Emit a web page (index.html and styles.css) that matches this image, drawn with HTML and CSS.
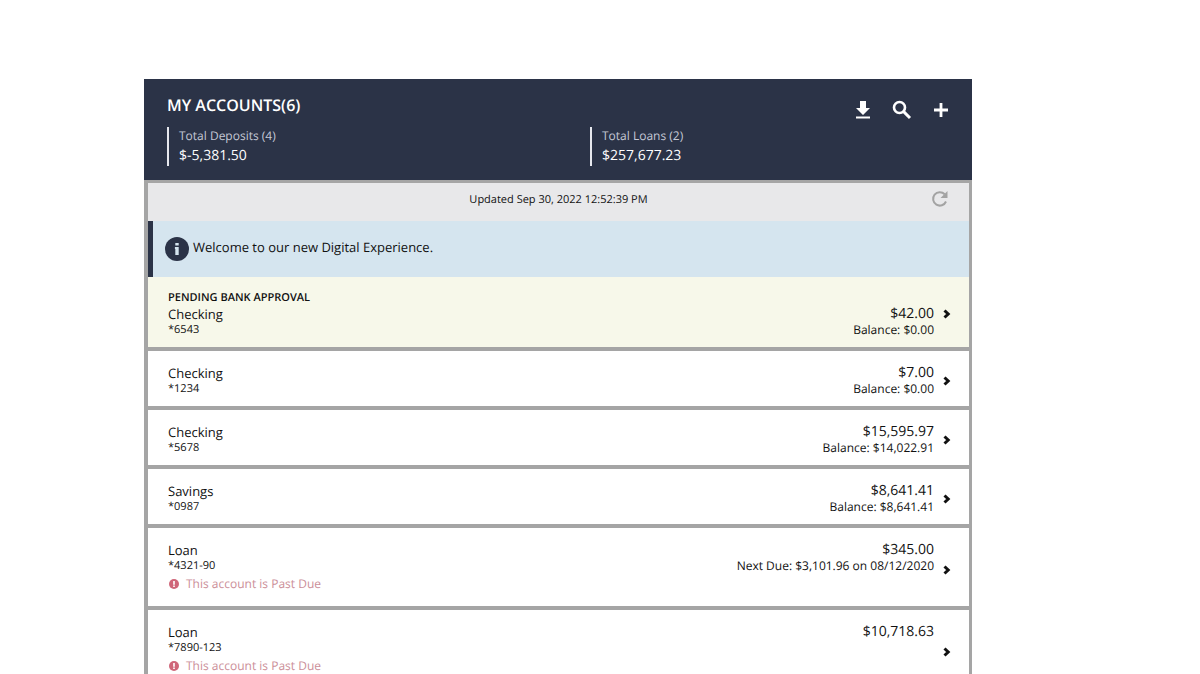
FILE: index.html
```html
<!DOCTYPE html>
<html lang="en">
<head>
    <meta charset="UTF-8">
    <title>My Accounts</title>
    <link rel="stylesheet" href="styles.css">
</head>
<body>
    <main class="accounts">
        <header class="accounts-header">
            <div class="header-top">
                <h1>MY ACCOUNTS(6)</h1>
                <div class="header-actions">
                    <button type="button" aria-label="Download">
                        <svg width="24" height="24" viewBox="0 0 24 24"><path d="M9 3h6v7h4l-7 7-7-7h4z M5 18.500h14v2H5z"/></svg>
                    </button>
                    <button type="button" aria-label="Search">
                        <svg width="24" height="24" viewBox="0 0 24 24"><circle cx="9.500" cy="9.500" r="5.500" fill="none" stroke="#fff" stroke-width="2.600"/><path d="M13.400 13.400L20 20" stroke="#fff" stroke-width="3"/></svg>
                    </button>
                    <button type="button" aria-label="Add account">
                        <svg width="24" height="24" viewBox="0 0 24 24"><path d="M10.600 5h2.800v5.600H19v2.800h-5.600V19h-2.800v-5.600H5v-2.800h5.600z"/></svg>
                    </button>
                </div>
            </div>
            <div class="totals">
                <div class="total">
                    <div class="total-label">Total Deposits (4)</div>
                    <div class="total-value">$-5,381.50</div>
                </div>
                <div class="total">
                    <div class="total-label">Total Loans (2)</div>
                    <div class="total-value">$257,677.23</div>
                </div>
            </div>
        </header>

        <div class="accounts-body">
            <div class="updated">
                <span>Updated Sep 30, 2022 12:52:39 PM</span>
                <button type="button" class="refresh" aria-label="Refresh">
                    <svg width="18" height="18" viewBox="0 0 18 18"><path d="M15 11.500A6.700 6.700 0 1 1 13.700 4.300" fill="none" stroke="#a3a3a3" stroke-width="2"/><path d="M16.500 1v7h-7z" fill="#a3a3a3"/></svg>
                </button>
            </div>

            <div class="welcome">
                <svg width="24" height="24" viewBox="0 0 24 24"><circle cx="12" cy="12" r="12" fill="#2b3347"/><path d="M10.300 6h3.400v2.600h-3.400z M9.900 10h3.800v8h-3.400v-6h-.4z" fill="#d5e5ef"/></svg>
                <span>Welcome to our new Digital Experience.</span>
            </div>

            <!-- Account list -->
            <a href="#" class="account pending">
                <div class="info">
                    <div class="status">PENDING BANK APPROVAL</div>
                    <div class="name">Checking</div>
                    <div class="detail">*6543</div>
                </div>
                <div class="amounts">
                    <div class="amount">$42.00</div>
                    <div class="balance">Balance: $0.00</div>
                </div>
                <svg class="arrow" width="8" height="10" viewBox="0 0 8 10"><path d="M1.500 1.500L5.200 5L1.500 8.500"/></svg>
            </a>
            <a href="#" class="account">
                <div class="info">
                    <div class="name">Checking</div>
                    <div class="detail">*1234</div>
                </div>
                <div class="amounts">
                    <div class="amount">$7.00</div>
                    <div class="balance">Balance: $0.00</div>
                </div>
                <svg class="arrow" width="8" height="10" viewBox="0 0 8 10"><path d="M1.500 1.500L5.200 5L1.500 8.500"/></svg>
            </a>
            <a href="#" class="account">
                <div class="info">
                    <div class="name">Checking</div>
                    <div class="detail">*5678</div>
                </div>
                <div class="amounts">
                    <div class="amount">$15,595.97</div>
                    <div class="balance">Balance: $14,022.91</div>
                </div>
                <svg class="arrow" width="8" height="10" viewBox="0 0 8 10"><path d="M1.500 1.500L5.200 5L1.500 8.500"/></svg>
            </a>
            <a href="#" class="account">
                <div class="info">
                    <div class="name">Savings</div>
                    <div class="detail">*0987</div>
                </div>
                <div class="amounts">
                    <div class="amount">$8,641.41</div>
                    <div class="balance">Balance: $8,641.41</div>
                </div>
                <svg class="arrow" width="8" height="10" viewBox="0 0 8 10"><path d="M1.500 1.500L5.200 5L1.500 8.500"/></svg>
            </a>
            <a href="#" class="account">
                <div class="info">
                    <div class="name">Loan</div>
                    <div class="detail">*4321-90</div>
                    <div class="past-due">
                        <svg width="10" height="10" viewBox="0 0 10 10"><circle cx="5" cy="5" r="5" fill="#cf6679"/><path d="M4.200 2h1.600v3.800H4.200z M4.200 6.600h1.600v1.500H4.200z" fill="#fff"/></svg>
                        <span>This account is Past Due</span>
                    </div>
                </div>
                <div class="amounts">
                    <div class="amount">$345.00</div>
                    <div class="balance">Next Due: $3,101.96 on 08/12/2020</div>
                </div>
                <svg class="arrow" width="8" height="10" viewBox="0 0 8 10"><path d="M1.500 1.500L5.200 5L1.500 8.500"/></svg>
            </a>
            <a href="#" class="account">
                <div class="info">
                    <div class="name">Loan</div>
                    <div class="detail">*7890-123</div>
                    <div class="past-due">
                        <svg width="10" height="10" viewBox="0 0 10 10"><circle cx="5" cy="5" r="5" fill="#cf6679"/><path d="M4.200 2h1.600v3.800H4.200z M4.200 6.600h1.600v1.500H4.200z" fill="#fff"/></svg>
                        <span>This account is Past Due</span>
                    </div>
                </div>
                <div class="amounts">
                    <div class="amount">$10,718.63</div>
                </div>
                <svg class="arrow" width="8" height="10" viewBox="0 0 8 10"><path d="M1.500 1.500L5.200 5L1.500 8.500"/></svg>
            </a>
        </div>
    </main>
</body>
</html>
```
FILE: styles.css
```css
* {
    box-sizing: border-box;
}
body {
    margin: 0;
    background: #fff;
    font-family: "Open Sans", "Noto Sans", sans-serif;
    text-rendering: geometricPrecision;
    color: #111;
}
button {
    display: flex;
    padding: 0;
    border: none;
    background: none;
    cursor: pointer;
}
.accounts {
    margin: 79px 19% 0 12%;
}
.accounts-header {
    background: #2b3347;
    color: #fff;
    padding: 16px 19px 14px 23px;
}
.header-top {
    display: flex;
    justify-content: space-between;
    height: 32px;
}
h1 {
    margin: 0;
    font-size: 16px;
    line-height: 20px;
    font-weight: 600;
}
.header-actions {
    display: flex;
    align-items: flex-start;
    gap: 15px;
    padding-top: 3px;
}
.header-actions svg {
    fill: #fff;
}
.totals {
    display: grid;
    grid-template-columns: 1fr 1fr;
    margin-right: -60px;
}
.total {
    border-left: 2px solid #e6e8ee;
    padding-left: 10px;
}
.total-label {
    font-size: 12px;
    line-height: 18px;
    color: #c5c9d6;
}
.total-value {
    font-size: 14px;
    line-height: 21px;
    font-weight: 500;
}
.accounts-body {
    border: 3px solid #a5a5a5;
    border-left-width: 4px;
}
.updated {
    display: grid;
    grid-template-columns: 1fr auto 1fr;
    height: 38px;
    padding: 0 20px;
    background: #e8e8ea;
    font-size: 11px;
    line-height: 33px;
}
.updated span {
    grid-column: 2;
}
.refresh {
    justify-self: end;
    align-self: start;
    padding-top: 7px;
}
.welcome {
    display: flex;
    align-items: center;
    gap: 4px;
    height: 56px;
    padding-left: 12px;
    border-left: 5px solid #2b3347;
    background: #d5e5ef;
    font-size: 13px;
}
.welcome span {
    padding-bottom: 4px;
}
.account {
    display: flex;
    padding: 14px 18px 10px 20px;
    border-bottom: 4px solid #a5a5a5;
    background: #fff;
    color: inherit;
    text-decoration: none;
}
.pending {
    padding-top: 12px;
    background: #f7f8ea;
}
.status {
    font-size: 11px;
    line-height: 17px;
    font-weight: 600;
}
.name {
    font-size: 13px;
    line-height: 16px;
}
.amount {
    font-size: 14px;
    line-height: 16px;
}
.detail {
    font-size: 11px;
    line-height: 15px;
}
.balance {
    font-size: 12px;
    line-height: 15px;
}
.amounts {
    margin-left: auto;
    text-align: right;
}
.pending .amounts {
    align-self: flex-end;
}
.arrow {
    align-self: center;
    margin-top: 1px;
    margin-left: 9px;
    fill: none;
    stroke: #111;
    stroke-width: 3;
}
.past-due {
    display: flex;
    align-items: center;
    gap: 7px;
    margin-bottom: 1px;
    padding-left: 1px;
    font-size: 12px;
    line-height: 22px;
    color: #cb8e98;
}
```
